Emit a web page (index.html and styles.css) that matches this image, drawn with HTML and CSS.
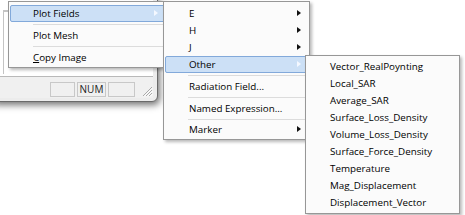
FILE: index.html
```html
<!DOCTYPE html>
<html>
<head>
<meta charset="utf-8">
<link rel="stylesheet" href="styles.css">
</head>
<body>
<div class="stage">
  <div class="win">
    <div class="client"><div class="panel"></div></div>
    <div class="status">
      <span class="pane p1"></span>
      <span class="pane p2">NUM</span>
      <span class="pane p3"></span>
      <span class="grip">
        <svg width="12" height="12" viewBox="0 0 12 12">
          <path d="M11 2 L2 11 M11 5 L5 11 M11 8 L8 11" stroke="#a8a8a8" stroke-width="1" fill="none"/>
          <path d="M11.5 3 L3 11.5 M11.5 6 L6 11.5 M11.5 9 L9 11.5" stroke="#ffffff" stroke-width="1" fill="none"/>
        </svg>
      </span>
    </div>
  </div>

  <ul class="menu m1">
    <li class="item hot sub">Plot Fields</li>
    <li class="sep"></li>
    <li class="item">Plot Mesh</li>
    <li class="sep"></li>
    <li class="item"><u>C</u>opy Image</li>
  </ul>

  <ul class="menu m2">
    <li class="item sub">E</li>
    <li class="item sub">H</li>
    <li class="item sub">J</li>
    <li class="item hot sub">Other</li>
    <li class="sep"></li>
    <li class="item">Radiation Field...</li>
    <li class="sep"></li>
    <li class="item">Named Expression...</li>
    <li class="sep thin"></li>
    <li class="item sub">Marker</li>
  </ul>

  <ul class="menu m3">
    <li class="item">Vector_RealPoynting</li>
    <li class="item">Local_SAR</li>
    <li class="item">Average_SAR</li>
    <li class="item">Surface_Loss_Density</li>
    <li class="item">Volume_Loss_Density</li>
    <li class="item">Surface_Force_Density</li>
    <li class="item">Temperature</li>
    <li class="item">Mag_Displacement</li>
    <li class="item">Displacement_Vector</li>
  </ul>
</div>
</body>
</html>
```

FILE: styles.css
```css
html, body {
  margin: 0;
  padding: 0;
  background: #ffffff;
}

body {
  font-family: "Open Sans", "Noto Sans", "DejaVu Sans", sans-serif;
  font-size: 9.8px;
  color: #000;
}

.stage {
  position: relative;
  width: 465px;
  height: 215px;
  overflow: hidden;
  background: #ffffff;
}

/* background application window */
.win {
  position: absolute;
  left: -8px;
  top: -4px;
  width: 160px;
  height: 101px;
  border: 1px solid #6a6a6a;
  border-radius: 0 0 6px 0;
  background: #ececec;
  padding: 0 4px 3px 0;
  display: flex;
  flex-direction: column;
  box-shadow: 2px 3px 7px rgba(0, 0, 0, 0.55);
}

.client {
  flex: 1;
  background: #ffffff;
  border-bottom: 1px solid #b9b9b9;
  padding: 13px 0 2px 10px;
  display: flex;
}

.panel {
  flex: 1;
  border-top: 2px solid #c4c4c4;
  border-left: 1px solid #c4c4c4;
}

.status {
  height: 20px;
  background: #f0f0f0;
  display: flex;
  align-items: flex-end;
  justify-content: flex-end;
  gap: 2px;
  padding-bottom: 1px;
}

.pane {
  height: 13px;
  border: 1px solid #c8c8c8;
  font-size: 10px;
  line-height: 13px;
  text-align: center;
  color: #222;
}

.p1 { width: 23px; }
.p2 { width: 27px; }
.p3 { width: 25px; margin-right: 4px; }

.grip {
  width: 12px;
  height: 12px;
  display: flex;
}

/* menus */
.menu {
  position: absolute;
  margin: 0;
  list-style: none;
  background: #fbfbfb;
  border: 1px solid #979797;
  padding: 2px 1px;
  box-shadow: 2px 2px 3px rgba(0, 0, 0, 0.28);
}

.m1 {
  left: 8px;
  top: 1px;
  width: 155px;
  padding-top: 3px;
  padding-bottom: 1px;
}

.m2 {
  left: 163px;
  top: 1px;
  width: 143px;
  padding-top: 3px;
  padding-bottom: 1px;
}

.m3 {
  left: 305px;
  top: 55px;
  width: 151px;
}

.item {
  position: relative;
  height: 15px;
  line-height: 15px;
  border: 1px solid transparent;
  border-radius: 2px;
  padding-left: 22px;
  white-space: nowrap;
}

.m2 .item { padding-left: 23px; }

.item.hot {
  background: #cce0f6;
  border-color: #82a9da;
}

.item.sub::after {
  content: "";
  position: absolute;
  right: 6px;
  top: 4px;
  border-left: 4px solid #111;
  border-top: 3.5px solid transparent;
  border-bottom: 3.5px solid transparent;
}

.item.hot.sub::after {
  border-left-color: #f4f8ff;
}

.sep {
  height: 1px;
  margin: 2px 0 2px 23px;
  background: #dcdcdc;
}

.sep.thin {
  margin-bottom: 1px;
}
```
